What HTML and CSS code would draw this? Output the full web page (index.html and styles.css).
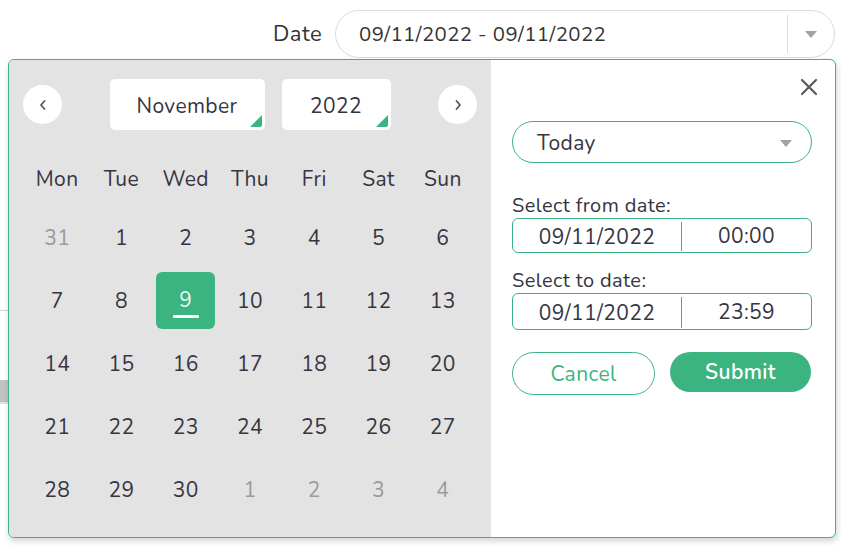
FILE: index.html
```html
<!DOCTYPE html>
<html>
<head>
<meta charset="utf-8">
<link rel="stylesheet" href="styles.css">
</head>
<body>
<div class="page">
  <div class="topbar">
    <span class="top-label">Date</span>
    <div class="range-select">
      <span class="range-text">09/11/2022 - 09/11/2022</span>
      <span class="range-arrow"><span class="tri"></span></span>
    </div>
  </div>
  <div class="backdrop">
    <div class="bg-line"></div>
    <div class="bg-bar"></div>
  </div>

  <div class="popup">
    <div class="cal">
      <div class="nav">
        <button class="circle-btn" aria-label="previous">
          <svg width="10" height="12" viewBox="0 0 10 12"><path d="M6.5 2 L3 6 L6.5 10" fill="none" stroke="#555" stroke-width="1.8" stroke-linecap="round" stroke-linejoin="round"/></svg>
        </button>
        <div class="pickers">
          <div class="picker month">November<span class="corner"></span></div>
          <div class="picker year">2022<span class="corner"></span></div>
        </div>
        <button class="circle-btn" aria-label="next">
          <svg width="10" height="12" viewBox="0 0 10 12"><path d="M3.5 2 L7 6 L3.5 10" fill="none" stroke="#555" stroke-width="1.8" stroke-linecap="round" stroke-linejoin="round"/></svg>
        </button>
      </div>
      <div class="grid">
        <div class="wd">Mon</div><div class="wd">Tue</div><div class="wd">Wed</div><div class="wd">Thu</div><div class="wd">Fri</div><div class="wd">Sat</div><div class="wd">Sun</div>
        <div class="day muted">31</div><div class="day">1</div><div class="day">2</div><div class="day">3</div><div class="day">4</div><div class="day">5</div><div class="day">6</div>
        <div class="day">7</div><div class="day">8</div><div class="day"><span class="sel">9</span></div><div class="day">10</div><div class="day">11</div><div class="day">12</div><div class="day">13</div>
        <div class="day">14</div><div class="day">15</div><div class="day">16</div><div class="day">17</div><div class="day">18</div><div class="day">19</div><div class="day">20</div>
        <div class="day">21</div><div class="day">22</div><div class="day">23</div><div class="day">24</div><div class="day">25</div><div class="day">26</div><div class="day">27</div>
        <div class="day">28</div><div class="day">29</div><div class="day">30</div><div class="day muted">1</div><div class="day muted">2</div><div class="day muted">3</div><div class="day muted">4</div>
      </div>
    </div>
    <div class="side">
      <button class="close" aria-label="close">
        <svg width="18" height="18" viewBox="0 0 18 18"><path d="M2 2 L16 16 M16 2 L2 16" stroke="#5a5a5a" stroke-width="2.2" stroke-linecap="round"/></svg>
      </button>
      <div class="preset">
        <span>Today</span>
        <span class="tri"></span>
      </div>
      <div class="label first">Select from date:</div>
      <div class="dt">
        <span class="dt-date">09/11/2022</span>
        <span class="dt-time">00:00</span>
      </div>
      <div class="label">Select to date:</div>
      <div class="dt tall">
        <span class="dt-date">09/11/2022</span>
        <span class="dt-time">23:59</span>
      </div>
      <div class="actions">
        <button class="btn cancel">Cancel</button>
        <button class="btn submit">Submit</button>
      </div>
    </div>
  </div>
</div>
</body>
</html>
```

FILE: styles.css
```css
* { box-sizing: border-box; }
html, body {
  margin: 0;
  padding: 0;
  background: #fff;
}
body {
  width: 841px;
  height: 547px;
  overflow: hidden;
  font-family: "Nunito", "Lato", "Noto Sans", sans-serif;
  letter-spacing: 0.4px;
  color: #35353f;
}
.page {
  position: relative;
  width: 841px;
  height: 547px;
}
.topbar {
  display: flex;
  justify-content: flex-end;
  align-items: center;
  gap: 13px;
  padding: 10px 6px 0 0;
}
.top-label {
  font-size: 22px;
  color: #333;
}
.range-select {
  width: 500px;
  height: 48px;
  border: 1px solid #dcdcdc;
  border-radius: 24px;
  display: flex;
  align-items: center;
}
.range-text {
  flex: 1;
  padding-left: 23px;
  font-size: 20.4px;
  color: #333;
}
.range-arrow {
  width: 47px;
  height: 38px;
  border-left: 1px solid #dcdcdc;
  display: flex;
  align-items: center;
  justify-content: center;
}
.tri {
  width: 0;
  height: 0;
  border-left: 6.5px solid transparent;
  border-right: 6.5px solid transparent;
  border-top: 7px solid #a3a3a3;
}
.backdrop {
  position: absolute;
  left: 0;
  top: 300px;
  width: 20px;
}
.bg-line {
  height: 1px;
  background: #d8d8d8;
  margin-top: 10px;
}
.bg-bar {
  height: 24px;
  margin-top: 69px;
  background: #c2c2c2;
  border-bottom: 2px solid #e0e0e0;
}
.popup {
  position: absolute;
  left: 8px;
  top: 59px;
  width: 828px;
  height: 479px;
  border: 1.5px solid #3cb482;
  border-radius: 6px;
  display: flex;
  overflow: hidden;
  background: #fff;
  box-shadow: 1px 3px 6px rgba(0, 0, 0, 0.18);
}
.cal {
  width: 482px;
  background: #e3e3e3;
  padding-top: 19px;
}
.nav {
  display: flex;
  align-items: center;
  justify-content: space-between;
  padding: 0 14px;
  height: 51px;
}
.circle-btn {
  width: 39px;
  height: 39px;
  border-radius: 50%;
  border: none;
  background: #fff;
  padding: 0;
  display: flex;
  align-items: center;
  justify-content: center;
}
.pickers {
  display: flex;
  gap: 17px;
}
.picker {
  position: relative;
  height: 51px;
  background: #fff;
  border-radius: 5px;
  display: flex;
  align-items: center;
  justify-content: center;
  font-size: 21px;
  color: #35353f;
  padding-top: 2px;
}
.month { width: 155px; }
.year { width: 109px; }
.corner {
  position: absolute;
  right: 3px;
  bottom: 3px;
  width: 0;
  height: 0;
  border-left: 12px solid transparent;
  border-bottom: 12px solid #3cb482;
  border-bottom-right-radius: 2px;
}
.grid {
  display: grid;
  grid-template-columns: repeat(7, 1fr);
  grid-template-rows: 55px repeat(5, 63px);
  padding: 0 16px;
  margin-top: 21px;
}
.wd, .day {
  display: flex;
  align-items: center;
  justify-content: center;
  font-size: 21px;
  color: #35353f;
}
.day.muted { color: #9a9a9a; }
.sel {
  position: relative;
  width: 59px;
  height: 57px;
  border-radius: 6px;
  background: #3cb482;
  color: #e8f7f0;
  display: flex;
  align-items: center;
  justify-content: center;
  padding-bottom: 2px;
}
.sel::after {
  content: "";
  position: absolute;
  left: 17px;
  right: 16px;
  bottom: 11px;
  height: 3px;
  background: #fff;
  border-radius: 1px;
}
.side {
  position: relative;
  flex: 1;
  padding: 61px 23px 0 21px;
}
.close {
  position: absolute;
  top: 17px;
  right: 16px;
  width: 20px;
  height: 20px;
  padding: 0;
  border: none;
  background: none;
  display: flex;
  align-items: center;
  justify-content: center;
}
.preset {
  height: 42px;
  border: 1.5px solid #3cb482;
  border-radius: 21px;
  display: flex;
  align-items: center;
  justify-content: space-between;
  padding: 2px 19px 0 24px;
  font-size: 21px;
  color: #35353f;
}
.label {
  margin-top: 16px;
  font-size: 20px;
  line-height: 24px;
  color: #35353f;
}
.label.first { margin-top: 31px; }
.dt {
  display: grid;
  grid-template-columns: 169px 1fr;
  height: 35px;
  border: 1px solid #3cb482;
  border-radius: 6px;
  font-size: 21px;
  color: #35353f;
}
.dt.tall { height: 37px; }
.dt-date, .dt-time {
  display: flex;
  align-items: center;
  justify-content: center;
}
.dt-date {
  border-right: 1.5px solid #3cb482;
  margin: 3px 0 1px;
}
.actions {
  display: flex;
  gap: 15px;
  margin-top: 22px;
  align-items: flex-start;
}
.btn {
  font-family: inherit;
  font-size: 21px;
  letter-spacing: 0.4px;
  border-radius: 22px;
  padding: 0;
}
.cancel {
  width: 143px;
  height: 43px;
  border: 1px solid #3cb482;
  background: #fff;
  color: #3cb482;
}
.submit {
  width: 141px;
  height: 40px;
  border: none;
  background: #3cb482;
  color: #fff;
  font-weight: 600;
}
```
